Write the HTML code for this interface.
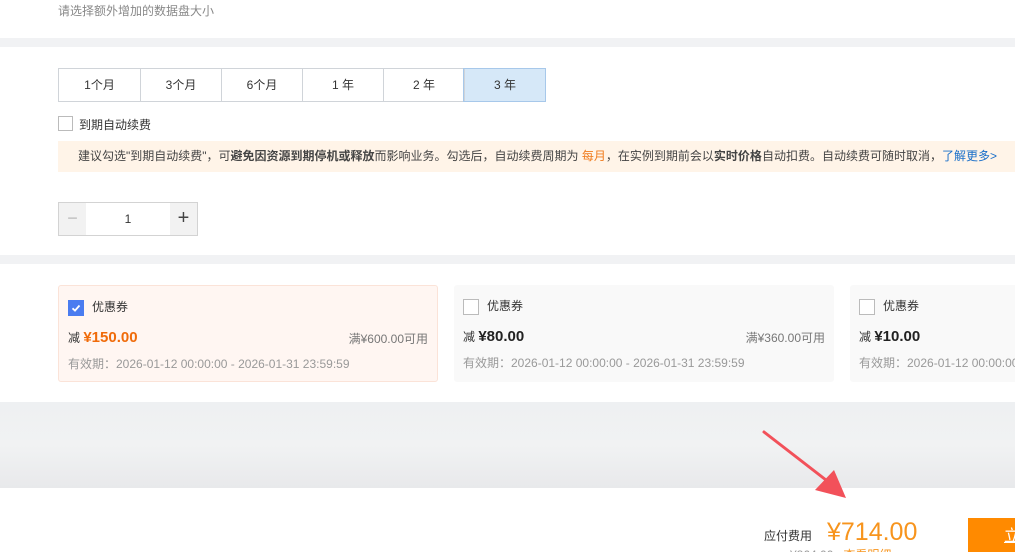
<!DOCTYPE html>
<html><head><meta charset="utf-8">
<style>
*{margin:0;padding:0;box-sizing:border-box}
html,body{width:1015px;height:552px;overflow:hidden}
body{position:relative;background:#fff;font-family:"Liberation Sans","Noto Sans CJK SC",sans-serif;font-size:12px;color:#333}
.a{position:absolute}
.band{position:absolute;left:0;width:1015px;background:#f1f2f4}
.tabs{left:58px;top:68px;display:flex;border:1px solid #d0d4d9;height:34px}
.tabs div{width:81px;height:32px;line-height:32px;text-align:center;border-left:1px solid #d0d4d9;color:#333}
.tabs div:first-child{border-left:none}
.tabs .on{background:#d6e8f8;box-shadow:0 0 0 1px #a7c8ea;position:relative}
.cb{width:15px;height:15px;border:1px solid #bbb;background:#fff}
.card{position:absolute;top:285px;height:97px;width:380px;border-radius:3px;background:#f9f9f9}
.card .cb{position:absolute;left:9px;top:14px;width:16px;height:16px}
.card .t{position:absolute;left:33px;top:12px;font-size:12px;color:#333}
.card .p{position:absolute;left:9px;top:43px;font-size:12px;color:#333}
.card .p b{font-size:15px;font-weight:bold;color:#222}
.card .m{position:absolute;right:9px;top:44px;color:#777}
.card .d{position:absolute;left:9px;top:69px;color:#999}
</style></head><body>
<div class="a" style="left:58px;top:2px;color:#888">请选择额外增加的数据盘大小</div>
<div class="band" style="top:38px;height:9px"></div>
<div class="a tabs"><div>1个月</div><div>3个月</div><div>6个月</div><div>1 年</div><div>2 年</div><div class="on">3 年</div></div>
<div class="a cb" style="left:58px;top:116px"></div>
<div class="a" style="left:79px;top:116px">到期自动续费</div>
<div class="a" style="left:58px;top:141px;width:957px;height:31px;background:#fff4e8;line-height:31px;padding-left:20px;color:#444;white-space:nowrap;overflow:hidden">建议勾选"到期自动续费"，可<b>避免因资源到期停机或释放</b>而影响业务。勾选后，自动续费周期为 <span style="color:#f07c1e">每月</span>，在实例到期前会以<b>实时价格</b>自动扣费。自动续费可随时取消，<span style="color:#1a6fc9">了解更多&gt;</span></div>
<div class="a" style="left:58px;top:202px;width:140px;height:34px;border:1px solid #d3d3d3;display:flex">
<div style="width:27px;background:#f2f2f2;color:#bbb;text-align:center;line-height:30px;font-size:18px">−</div>
<div style="flex:1;text-align:center;line-height:32px;color:#333">1</div>
<div style="width:27px;background:#f2f2f2;color:#444;text-align:center;line-height:30px;font-size:20px">+</div></div>
<div class="band" style="top:255px;height:9px"></div>
<div class="card" style="left:58px;background:#fff6f2;border:1px solid #fbe3d8">
<div class="cb" style="background:#4a7cf0;border-color:#4a7cf0"><svg width="14" height="14" viewBox="0 0 14 14"><path d="M3.5 7.3 L6 9.6 L10.5 4.5" stroke="#fff" stroke-width="1.8" fill="none"/></svg></div>
<div class="t">优惠券</div><div class="p">减 <b style="color:#f06b0a">¥150.00</b></div><div class="m">满¥600.00可用</div><div class="d">有效期：2026-01-12 00:00:00 - 2026-01-31 23:59:59</div></div>
<div class="card" style="left:454px"><div class="cb"></div><div class="t">优惠券</div><div class="p">减 <b>¥80.00</b></div><div class="m">满¥360.00可用</div><div class="d">有效期：2026-01-12 00:00:00 - 2026-01-31 23:59:59</div></div>
<div class="card" style="left:850px"><div class="cb"></div><div class="t">优惠券</div><div class="p">减 <b>¥10.00</b></div><div class="m">满¥60.00可用</div><div class="d">有效期：2026-01-12 00:00:00 - 2026-01-31 23:59:59</div></div>
<div class="a" style="left:0;top:402px;width:1015px;height:86px;background:linear-gradient(#eef0f2,#f1f2f3 50%,#e8e9eb)"></div>
<svg class="a" style="left:0;top:0" width="1015" height="552"><path d="M764 432 L826 480" stroke="#f2515a" stroke-width="3" stroke-linecap="round"/><path d="M846 498 L815 490 L834 470 Z" fill="#f2515a"/></svg>
<div class="a" style="left:764px;top:527px;font-size:12px;color:#333">应付费用</div>
<div class="a" style="left:827px;top:516px;font-size:25px;color:#f7941d;line-height:32px">¥714.00</div>
<div class="a" style="left:790px;top:546px;color:#999">¥864.00 &nbsp; <span style="color:#f7941d">查看明细</span></div>
<div class="a" style="left:968px;top:518px;width:47px;height:40px;background:#ff8a00;color:#fff;font-size:16px;line-height:38px;padding-left:36px;text-decoration:underline;white-space:nowrap;overflow:hidden">立即购买</div>
</body></html>
